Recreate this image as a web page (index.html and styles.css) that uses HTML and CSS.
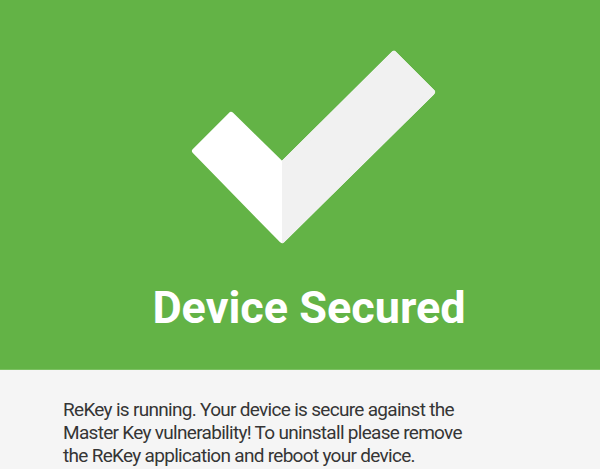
FILE: index.html
```html
<!DOCTYPE html>
<html lang="en">
<head>
    <meta charset="UTF-8">
    <meta name="viewport" content="width=device-width, initial-scale=1.0">
    <title>ReKey</title>
    <link rel="stylesheet" href="styles.css">
</head>
<body>
    <div class="status-panel">
        <svg class="check-icon" width="252" height="200" viewBox="188 47 252 200">
            <defs>
                <clipPath id="rightHalf">
                    <rect x="282" y="40" width="170" height="220"></rect>
                </clipPath>
            </defs>
            <polygon class="check-light" points="231,115 282,165 394,54 432,92 282,240 195,151"></polygon>
            <polygon class="check-shade" clip-path="url(#rightHalf)" points="231,115 282,165 394,54 432,92 282,240 195,151"></polygon>
        </svg>
        <h1 class="status-title">Device Secured</h1>
    </div>
    <div class="status-info">
        <p>ReKey is running. Your device is secure against the Master Key vulnerability! To uninstall please remove the ReKey application and reboot your device.</p>
    </div>
</body>
</html>
```

FILE: styles.css
```css
:root {
    --green: #63b346;
    --green-edge: #7cc162;
    --page-bg: #f5f5f5;
    --text-color: #353535;
}

* {
    box-sizing: border-box;
    margin: 0;
    padding: 0;
}

body {
    font-family: Roboto, 'Noto Sans', sans-serif;
    background-color: var(--page-bg);
    color: var(--text-color);
}

.status-panel {
    background-color: var(--green);
    height: 370px;
    border-bottom: 1px solid var(--green-edge);
    display: flex;
    flex-direction: column;
}

.check-icon {
    display: block;
    margin: 47px 0 0 188px;
}

.check-light {
    fill: #ffffff;
    stroke: #ffffff;
    stroke-width: 6;
    stroke-linejoin: round;
}

.check-shade {
    fill: #f1f1f1;
    stroke: #f1f1f1;
    stroke-width: 6;
    stroke-linejoin: round;
}

.status-title {
    margin-top: 38px;
    padding-left: 18px;
    text-align: center;
    color: #ffffff;
    font-size: 45px;
    font-weight: 700;
    line-height: 1;
}

.status-info {
    padding: 28px 40px 0 63px;
}

.status-info p {
    font-size: 19px;
    line-height: 23px;
    letter-spacing: -0.7px;
    max-width: 405px;
}
```
